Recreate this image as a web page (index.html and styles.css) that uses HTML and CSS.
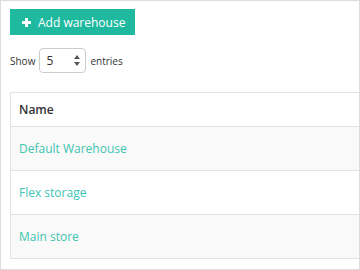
FILE: index.html
```html
<!DOCTYPE html>
<html lang="en">

<head>
    <meta charset="UTF-8">
    <meta name="viewport" content="width=device-width, initial-scale=1.0">
    <title>Warehouses</title>
    <link rel="stylesheet" href="styles.css">
</head>

<body>
    <div class="panel">
        <button class="btn-add" type="button">
            <svg class="plus" width="9" height="9" viewBox="0 0 9 9">
                <rect x="3" y="0" width="3" height="9" fill="#fff" />
                <rect x="0" y="3" width="9" height="3" fill="#fff" />
            </svg>
            Add warehouse
        </button>

        <div class="length-row">
            <span>Show</span>
            <div class="select-box">
                <span>5</span>
                <svg width="6" height="11" viewBox="0 0 6 11">
                    <path d="M3 0 L6 4 L0 4 Z" fill="#555" />
                    <path d="M0 7 L6 7 L3 11 Z" fill="#555" />
                </svg>
            </div>
            <span>entries</span>
        </div>

        <!-- Warehouse list -->
        <table class="list">
            <thead>
                <tr>
                    <th>Name</th>
                </tr>
            </thead>
            <tbody>
                <tr class="odd">
                    <td><a href="#">Default Warehouse</a></td>
                </tr>
                <tr>
                    <td><a href="#">Flex storage</a></td>
                </tr>
                <tr class="odd">
                    <td><a href="#">Main store</a></td>
                </tr>
            </tbody>
        </table>
    </div>
</body>

</html>
```

FILE: styles.css
```css
* {
    box-sizing: border-box;
}

body {
    margin: 0;
    padding: 0;
    font-family: "Open Sans", sans-serif;
    color: #333;
    background-color: #fff;
}

.panel {
    width: 360px;
    height: 270px;
    border: 1px solid #ddd;
    padding: 8px 0 0 9px;
    overflow: hidden;
}

.btn-add {
    display: flex;
    align-items: center;
    gap: 7px;
    height: 26px;
    padding: 0 10px 0 12px;
    background-color: #1fb9a0;
    color: #fff;
    border: none;
    border-radius: 0;
    font-family: "Open Sans", sans-serif;
    font-size: 12px;
    cursor: pointer;
}

.length-row {
    display: flex;
    align-items: center;
    gap: 3px;
    margin-top: 13px;
    font-size: 10px;
    color: #333;
}

.select-box {
    display: flex;
    align-items: center;
    justify-content: space-between;
    width: 47px;
    height: 25px;
    margin: 0 1px;
    padding: 0 5px 0 6px;
    border: 1px solid #ccc;
    border-radius: 4px;
    font-size: 12px;
}

.list {
    width: 400px;
    margin-top: 19px;
    border-collapse: collapse;
    font-size: 12px;
}

.list th,
.list td {
    text-align: left;
    padding: 0 8px;
    border: 1px solid #e3e3e3;
}

.list th {
    height: 34px;
    font-weight: 600;
    color: #333;
}

.list td {
    height: 44px;
}

.list tr.odd td {
    background-color: #f9f9f9;
}

.list a {
    color: #3cc5b0;
    text-decoration: none;
}
```
